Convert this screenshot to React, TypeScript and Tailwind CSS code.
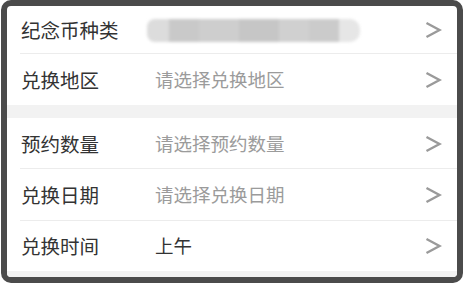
import React from "react";

const Chevron = () => (
  <svg width="18" height="20" viewBox="0 0 18 20" className="shrink-0">
    <path d="M2.5 3 L15.5 10 L2.5 17" fill="none" stroke="#9a9a9a" strokeWidth="2.4" strokeLinejoin="miter" />
  </svg>
);

function Row({ label, value, valueClass, h, divider, children }: { label: string; value?: string; valueClass?: string; h: string; divider?: boolean; children?: React.ReactNode }) {
  return (
    <div className={`relative flex items-center pl-[14px] pr-[15px] ${h}`}>
      <div className="w-[134px] shrink-0 text-[19.5px] text-[#333333]">{label}</div>
      <div className={`flex-1 text-[18.5px] ${valueClass ?? ""}`}>{children ?? value}</div>
      <Chevron />
      {divider && <div className="absolute bottom-0 left-[13px] right-0 h-px bg-[#ececec]" />}
    </div>
  );
}

export default function App() {
  return (
    <div className="w-[466px] h-[287px] bg-white" style={{ fontFamily: '"Noto Sans CJK SC", "Noto Sans", sans-serif' }}>
      <div className="ml-px w-[462px] h-[283px] border-[6px] border-[#4b4b4b] rounded-[10px] overflow-hidden flex flex-col bg-white">
        <Row label="纪念币种类" h="h-[48px]" divider>
          <div className="relative h-[23px] w-[213px] -ml-[8px]">
            <div className="absolute inset-0 flex blur-[1.5px]">
              <div className="w-[22px] bg-[#dcdcdc] rounded-l-[8px]" />
              <div className="w-[30px] bg-[#c9c9c9]" />
              <div className="w-[40px] bg-[#cecece]" />
              <div className="w-[40px] bg-[#c6c6c6]" />
              <div className="w-[30px] bg-[#d0d0d0]" />
              <div className="w-[30px] bg-[#cbcbcb]" />
              <div className="w-[21px] bg-[#e6e6e6] rounded-r-[10px]" />
            </div>
          </div>
        </Row>
        <Row label="兑换地区" value="请选择兑换地区" valueClass="text-[#9b9b9b]" h="h-[51px]" />
        <div className="h-[13px] bg-[#f2f2f2]" />
        <Row label="预约数量" value="请选择预约数量" valueClass="text-[#9b9b9b]" h="h-[51px]" divider />
        <Row label="兑换日期" value="请选择兑换日期" valueClass="text-[#9b9b9b]" h="h-[52px]" divider />
        <Row label="兑换时间" value="上午" valueClass="text-[#333333]" h="h-[50px]" />
        <div className="flex-1 bg-[#f2f2f2]" />
      </div>
    </div>
  );
}
